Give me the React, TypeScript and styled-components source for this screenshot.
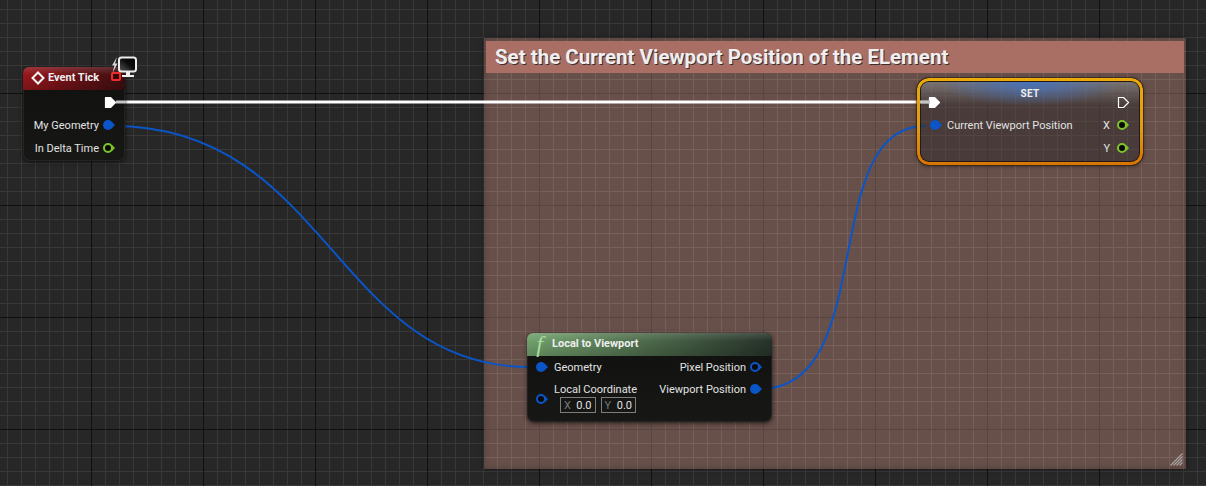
import React from "react";
import styled, { createGlobalStyle } from "styled-components";

const Global = createGlobalStyle`
  html, body { margin: 0; padding: 0; background: #262626; }
  #root { width: 1206px; height: 486px; overflow: hidden; }
`;

const Canvas = styled.div`
  position: relative;
  width: 1206px;
  height: 486px;
  overflow: hidden;
  font-family: Roboto, "Liberation Sans", sans-serif;
  background-color: #272727;
  background-image:
    linear-gradient(to right, #101010 1px, transparent 1px),
    linear-gradient(to bottom, #101010 1px, transparent 1px),
    linear-gradient(to right, #383838 1px, transparent 1px),
    linear-gradient(to bottom, #383838 1px, transparent 1px);
  background-size: 112px 112px, 112px 112px, 14px 14px, 14px 14px;
  background-position: 91px 0, 0 93px, 7px 0, 0 9px;
`;

const CommentBox = styled.div`
  position: absolute;
  left: 484px;
  top: 38px;
  width: 702px;
  height: 431px;
  box-sizing: border-box;
  padding: 3px 2px 0;
  background-color: #674f4a;
  background-image:
    linear-gradient(to right, #5a4540 1px, transparent 1px),
    linear-gradient(to bottom, #5a4540 1px, transparent 1px),
    linear-gradient(to right, #775f5a 1px, transparent 1px),
    linear-gradient(to bottom, #775f5a 1px, transparent 1px);
  background-size: 112px 112px, 112px 112px, 14px 14px, 14px 14px;
  background-position: 55px 0, 0 55px, 13px 0, 0 13px;
  box-shadow: 0 0 4px rgba(0, 0, 0, 0.5), inset 0 0 6px rgba(0, 0, 0, 0.22);
`;

const CommentTitle = styled.div`
  height: 32px;
  box-sizing: border-box;
  padding-left: 9px;
  display: flex;
  align-items: center;
  background: #a96f65;
  color: #f0eeee;
  font-size: 20.5px;
  font-weight: 700;
  text-shadow: 1px 1px 0 #3a3030;
`;

const ResizeGrip = styled.svg`
  position: absolute;
  right: 3px;
  bottom: 3px;
`;

const Wires = styled.svg`
  position: absolute;
  inset: 0;
  pointer-events: none;
`;

const Node = styled.div<{ $x: number; $y: number; $w: number; $h: number }>`
  position: absolute;
  left: ${(p) => p.$x}px;
  top: ${(p) => p.$y}px;
  width: ${(p) => p.$w}px;
  height: ${(p) => p.$h}px;
  box-sizing: border-box;
  display: flex;
  flex-direction: column;
  border-radius: 7px;
  background: linear-gradient(to bottom, #10110f, #171816);
  box-shadow: 0 1px 4px rgba(0, 0, 0, 0.7), inset 0 0 0 1px rgba(60, 60, 60, 0.35);
  color: #e2e2e2;
  font-size: 11px;
`;

const SetNode = styled(Node)`
  padding: 3px;
  background: rgba(36, 36, 36, 0.46);
  border-radius: 12px;
  box-shadow: 0 0 0 1px rgba(40, 25, 0, 0.5), 0 1px 4px rgba(0, 0, 0, 0.5),
    inset 0 0 0 4px rgba(20, 15, 12, 0.75);
  &::before {
    content: "";
    position: absolute;
    inset: 0;
    padding: 3px;
    border-radius: 12px;
    background: linear-gradient(to bottom, #eba90c, #e39a10 60%, #d87400);
    -webkit-mask: linear-gradient(#000 0 0) content-box, linear-gradient(#000 0 0);
    -webkit-mask-composite: xor;
    mask-composite: exclude;
  }
`;

const Header = styled.div<{ $from: string; $to: string }>`
  height: 23px;
  flex: none;
  display: flex;
  align-items: center;
  box-sizing: border-box;
  padding-bottom: 2px;
  border-radius: 6px 6px 0 0;
  background:
    linear-gradient(to bottom, rgba(255, 255, 255, 0.14), rgba(255, 255, 255, 0) 35%, rgba(0, 0, 0, 0.16)),
    linear-gradient(to right, ${(p) => p.$from}, ${(p) => p.$to});
  font-weight: 700;
  color: #eeeeee;
  font-size: 11px;
`;

const DiamondIcon = styled.svg`
  margin: 0 3px 0 8px;
  flex: none;
`;

const SetGlow = styled.div`
  position: absolute;
  left: 4px;
  right: 4px;
  top: 4px;
  height: 24px;
  border-radius: 8px 8px 0 0;
  background:
    radial-gradient(ellipse 42% 100% at 50% 0%, rgba(60, 115, 205, 0.8), rgba(60, 115, 205, 0) 100%),
    linear-gradient(to bottom, rgba(170, 170, 170, 0.5), rgba(170, 170, 170, 0));
`;

const SetTitle = styled.div`
  position: absolute;
  left: 0;
  right: 0;
  top: 10px;
  text-align: center;
  font-weight: 700;
  font-size: 10px;
  letter-spacing: 0.3px;
  color: #eeeeee;
`;

const FuncGlyph = styled.span`
  font-family: "Liberation Serif", serif;
  font-style: italic;
  font-size: 24px;
  font-weight: 400;
  color: #a6dca0;
  width: 25px;
  text-align: center;
  line-height: 1;
`;

const Rows = styled.div`
  position: relative;
  display: flex;
  flex-direction: column;
  padding-top: 14px;
  gap: 9px;
`;

const EventRows = styled(Rows)`
  padding-top: 5px;
`;

const Row = styled.div<{ $between?: boolean }>`
  display: flex;
  align-items: center;
  height: 14px;
  justify-content: ${(p) => (p.$between ? "space-between" : "flex-end")};
`;

const Side = styled.div<{ $gap?: number; $pl?: number; $pr?: number }>`
  display: flex;
  align-items: center;
  gap: ${(p) => p.$gap ?? 5}px;
  padding-left: ${(p) => p.$pl ?? 0}px;
  padding-right: ${(p) => p.$pr ?? 0}px;
`;

const Label = styled.span`
  white-space: nowrap;
  line-height: 14px;
  margin-top: 2px;
`;

const StackLabel = styled(Label)`
  margin-top: 1px;
`;

const FuncBody = styled.div`
  display: flex;
  justify-content: space-between;
  padding-top: 4px;
`;

const Column = styled.div`
  display: flex;
  flex-direction: column;
  gap: 8px;
`;

const InputPin = styled.div`
  display: flex;
  align-items: center;
  gap: 5px;
  padding-left: 8px;
`;

const PinNudge = styled.div`
  display: flex;
  margin-top: 2px;
`;

const InputStack = styled.div`
  display: flex;
  flex-direction: column;
`;

const VectorInputs = styled.div`
  display: flex;
  gap: 5px;
  margin-left: 6px;
`;

const NumberBox = styled.div`
  width: 35.5px;
  height: 16px;
  box-sizing: border-box;
  border: 1px solid #7d7d7b;
  display: flex;
  justify-content: space-between;
  align-items: center;
  padding: 0 3px;
  font-size: 11px;
`;

const AxisLetter = styled.span`
  color: #777;
`;

const LatentBadge = styled.div`
  position: absolute;
  left: 88px;
  top: 5px;
  width: 10px;
  height: 9px;
  box-sizing: border-box;
  border: 2px solid #ee2a2a;
  border-radius: 2px;
  background: #3a0608;
`;

const Exec = ({ filled = true }: { filled?: boolean }) => (
  <svg width="13" height="13" viewBox="0 0 13 13" style={{ flex: "none" }}>
    <path
      d="M1.5 1.5H6.5L11.5 6.5L6.5 11.5H1.5Z"
      fill={filled ? "#ffffff" : "none"}
      stroke="#ffffff"
      strokeWidth="1.2"
      strokeLinejoin="round"
    />
  </svg>
);

const Pin = ({ color, filled }: { color: string; filled: boolean }) => (
  <svg width="14" height="12" viewBox="0 0 14 12" style={{ flex: "none" }}>
    <path d="M10 3L13 6L10 9Z" fill={color} />
    <circle
      cx="6"
      cy="6"
      r={filled ? 5 : 4}
      fill={filled ? color : "#0a0a0a"}
      stroke={color}
      strokeWidth={filled ? 0 : 2}
    />
  </svg>
);

const BLUE = "#0a55c8";
const GREEN = "#7ec52c";

export default function App() {
  return (
    <Canvas>
      <Global />
      <CommentBox>
        <CommentTitle>Set the Current Viewport Position of the ELement</CommentTitle>
        <ResizeGrip width="13" height="13" viewBox="0 0 13 13">
          <path d="M0.5 12.5L12.5 0.5M3.5 12.5L12.5 3.5M6.5 12.5L12.5 6.5M9.5 12.5L12.5 9.5" stroke="#aaa5a3" strokeWidth="1.1" />
        </ResizeGrip>
      </CommentBox>

      <Wires width="1206" height="486" viewBox="0 0 1206 486">
        <path d="M114 102H930" stroke="#ffffff" strokeWidth="3" fill="none" />
        <path d="M113 126C328 126 335 367 530 367" stroke={BLUE} strokeWidth="2" fill="none" />
        <path d="M760 389C880 389 817 126 925 126" stroke={BLUE} strokeWidth="2" fill="none" />
      </Wires>

      <Node $x={23} $y={67} $w={102} $h={94}>
        <Header $from="#96161c" $to="#3c0e10">
          <DiamondIcon width="14" height="14" viewBox="0 0 14 14">
            <path d="M7 1.5L12.5 7L7 12.5L1.5 7Z" fill="none" stroke="#f2f2f2" strokeWidth="2" />
          </DiamondIcon>
          Event Tick
        </Header>
        <LatentBadge />
        <EventRows>
          <Row>
            <Side $pr={8}>
              <Exec />
            </Side>
          </Row>
          <Row>
            <Side $pr={9} $gap={3}>
              <Label>My Geometry</Label>
              <Pin color={BLUE} filled />
            </Side>
          </Row>
          <Row>
            <Side $pr={9} $gap={3}>
              <Label>In Delta Time</Label>
              <Pin color={GREEN} filled={false} />
            </Side>
          </Row>
        </EventRows>
      </Node>

      <SetNode $x={917} $y={78} $w={226} $h={87}>
        <SetGlow />
        <SetTitle>SET</SetTitle>
        <Rows>
          <Row $between>
            <Side $pl={8}>
              <Exec />
            </Side>
            <Side $pr={10}>
              <Exec filled={false} />
            </Side>
          </Row>
          <Row $between>
            <Side $pl={9} $gap={4}>
              <Pin color={BLUE} filled />
              <Label>Current Viewport Position</Label>
            </Side>
            <Side $pr={10} $gap={6}>
              <Label>X</Label>
              <Pin color={GREEN} filled={false} />
            </Side>
          </Row>
          <Row>
            <Side $pr={10} $gap={6}>
              <Label>Y</Label>
              <Pin color={GREEN} filled={false} />
            </Side>
          </Row>
        </Rows>
      </SetNode>

      <Node $x={527} $y={333} $w={245} $h={89}>
        <Header $from="#72a06c" $to="#263229">
          <FuncGlyph>f</FuncGlyph>
          Local to Viewport
        </Header>
        <FuncBody>
          <Column>
            <Row $between>
              <Side $pl={8}>
                <Pin color={BLUE} filled />
                <Label>Geometry</Label>
              </Side>
            </Row>
            <InputPin>
              <PinNudge>
                <Pin color={BLUE} filled={false} />
              </PinNudge>
              <InputStack>
                <StackLabel>Local Coordinate</StackLabel>
                <VectorInputs>
                  <NumberBox>
                    <AxisLetter>X</AxisLetter>0.0
                  </NumberBox>
                  <NumberBox>
                    <AxisLetter>Y</AxisLetter>0.0
                  </NumberBox>
                </VectorInputs>
              </InputStack>
            </InputPin>
          </Column>
          <Column>
            <Row>
              <Side $pr={9} $gap={3}>
                <Label>Pixel Position</Label>
                <Pin color={BLUE} filled={false} />
              </Side>
            </Row>
            <Row>
              <Side $pr={9} $gap={3}>
                <Label>Viewport Position</Label>
                <Pin color={BLUE} filled />
              </Side>
            </Row>
          </Column>
        </FuncBody>
      </Node>

      <Wires width="1206" height="486" viewBox="0 0 1206 486">
        <path d="M116 102H125" stroke="#c4c4c4" strokeWidth="3" />
        <path d="M920 102H930" stroke="#c4c4c4" strokeWidth="3" />
        <defs>
          <linearGradient id="screenGloss" x1="0" y1="1" x2="1" y2="0">
            <stop offset="0" stopColor="#5a5a5a" />
            <stop offset="0.55" stopColor="#0c0c0c" />
            <stop offset="1" stopColor="#000000" />
          </linearGradient>
        </defs>
        <path d="M117 57L112 65.5H114.5L112.5 73L117.5 63.5H115Z" fill="#d8d8d8" />
        <rect x="119" y="57.5" width="17" height="14" rx="2.5" fill="url(#screenGloss)" stroke="#ececec" strokeWidth="2" />
        <path d="M126 72H130V75H134V77H122V75H126Z" fill="#f0f0f0" />
      </Wires>
    </Canvas>
  );
}
